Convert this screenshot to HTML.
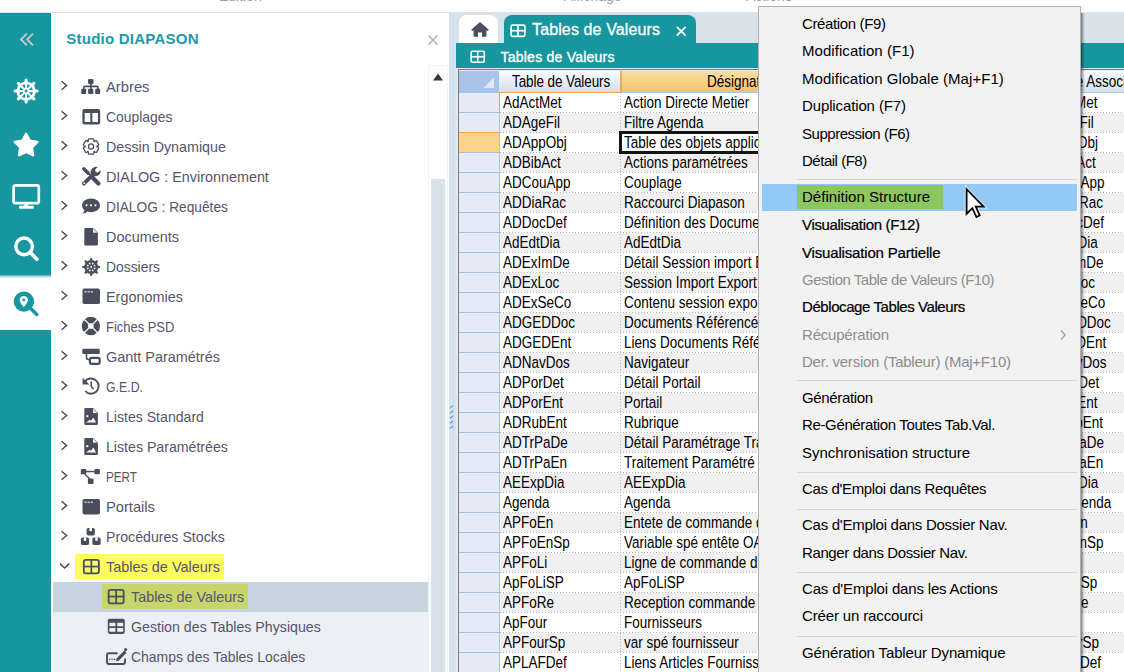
<!DOCTYPE html>
<html><head><meta charset="utf-8"><style>
html,body{margin:0;padding:0;}
body{width:1124px;height:672px;overflow:hidden;position:relative;background:#fff;font-family:'Liberation Sans', sans-serif;}
.abs{position:absolute;}
.t{position:absolute;white-space:nowrap;}
.dotx{background:repeating-linear-gradient(90deg,#b4b4b4 0 1px,transparent 1px 3px);}
.doty{background:repeating-linear-gradient(180deg,#b4b4b4 0 1px,transparent 1px 3px);}
.focus{box-sizing:border-box;border:3px solid #141414;outline:none;}
</style></head><body>
<div class="abs" style="left:0;top:12px;width:1124px;height:1px;background:#dce5ec"></div><div class="t " style="left:219px;top:-11.15px;font-size:14px;line-height:14px;color:#9a9ea6;">Edition</div><div class="t " style="left:563.5px;top:-11.15px;font-size:14px;line-height:14px;color:#9a9ea6;">Affichage</div><div class="t " style="left:746px;top:-11.15px;font-size:14px;line-height:14px;color:#9a9ea6;">Actions</div><div class="abs" style="left:0;top:13px;width:51px;height:659px;background:#1896a0"></div><div class="abs" style="left:0;top:275px;width:51px;height:55px;background:#fff"></div><div class="abs" style="left:0;top:275px;width:51px;height:3px;background:linear-gradient(rgba(24,150,160,0.75),rgba(24,150,160,0))"></div><svg class="abs" style="left:0;top:0" width="51" height="340" viewBox="0 0 51 340"><path d="M26.9 33.6L21 39.5L26.9 45.4M33 33.6L27.1 39.5L33 45.4" fill="none" stroke="#c8cacf" stroke-width="1.9"/><circle cx="26.1" cy="91.1" r="8.3" fill="none" stroke="#fff" stroke-width="2.8"/><line x1="28.60" y1="91.10" x2="35.10" y2="91.10" stroke="#fff" stroke-width="2.0"/><line x1="35.30" y1="91.10" x2="37.10" y2="91.10" stroke="#fff" stroke-width="3.0" stroke-linecap="round"/><line x1="27.87" y1="92.87" x2="32.46" y2="97.46" stroke="#fff" stroke-width="2.0"/><line x1="32.61" y1="97.61" x2="33.88" y2="98.88" stroke="#fff" stroke-width="3.0" stroke-linecap="round"/><line x1="26.10" y1="93.60" x2="26.10" y2="100.10" stroke="#fff" stroke-width="2.0"/><line x1="26.10" y1="100.30" x2="26.10" y2="102.10" stroke="#fff" stroke-width="3.0" stroke-linecap="round"/><line x1="24.33" y1="92.87" x2="19.74" y2="97.46" stroke="#fff" stroke-width="2.0"/><line x1="19.59" y1="97.61" x2="18.32" y2="98.88" stroke="#fff" stroke-width="3.0" stroke-linecap="round"/><line x1="23.60" y1="91.10" x2="17.10" y2="91.10" stroke="#fff" stroke-width="2.0"/><line x1="16.90" y1="91.10" x2="15.10" y2="91.10" stroke="#fff" stroke-width="3.0" stroke-linecap="round"/><line x1="24.33" y1="89.33" x2="19.74" y2="84.74" stroke="#fff" stroke-width="2.0"/><line x1="19.59" y1="84.59" x2="18.32" y2="83.32" stroke="#fff" stroke-width="3.0" stroke-linecap="round"/><line x1="26.10" y1="88.60" x2="26.10" y2="82.10" stroke="#fff" stroke-width="2.0"/><line x1="26.10" y1="81.90" x2="26.10" y2="80.10" stroke="#fff" stroke-width="3.0" stroke-linecap="round"/><line x1="27.87" y1="89.33" x2="32.46" y2="84.74" stroke="#fff" stroke-width="2.0"/><line x1="32.61" y1="84.59" x2="33.88" y2="83.32" stroke="#fff" stroke-width="3.0" stroke-linecap="round"/><circle cx="26.1" cy="91.1" r="3.3" fill="#fff"/><circle cx="26.1" cy="91.1" r="1.5" fill="#1896a0"/><polygon points="26.10,133.70 29.74,140.58 37.42,141.92 32.00,147.52 33.09,155.23 26.10,151.80 19.11,155.23 20.20,147.52 14.78,141.92 22.46,140.58" fill="#fff" stroke="#fff" stroke-width="2.4" stroke-linejoin="round"/><rect x="13.6" y="185.4" width="25.2" height="17.8" rx="2" fill="none" stroke="#fff" stroke-width="2.7"/><rect x="24.4" y="203" width="3.6" height="3.5" fill="#fff"/><rect x="19" y="205.8" width="14.8" height="3" rx="1" fill="#fff"/><circle cx="24.1" cy="246.4" r="8.3" fill="none" stroke="#fff" stroke-width="3.5"/><line x1="30.6" y1="252.9" x2="36.9" y2="259.2" stroke="#fff" stroke-width="3.7" stroke-linecap="round"/><circle cx="23.9" cy="301.6" r="10.2" fill="#1896a0"/><line x1="30" y1="307.7" x2="36.8" y2="314.5" stroke="#1896a0" stroke-width="3.5" stroke-linecap="round"/><path d="M23.8 307.2C22.2 305 19.6 302.4 19.6 300.1A4.2 4.2 0 0 1 28 300.1C28 302.4 25.4 305 23.8 307.2Z" fill="#fff"/><circle cx="23.8" cy="299.9" r="1.4" fill="#1896a0"/></svg><div class="abs" style="left:51px;top:13px;width:398px;height:659px;background:#fff"></div><div class="t " style="left:66.3px;top:31.10px;font-size:15px;line-height:15px;color:#1b9aab;font-weight:bold;letter-spacing:0.24px;">Studio DIAPASON</div><svg class="abs" style="left:427px;top:34px" width="12" height="12" viewBox="0 0 12 12"><path d="M1.5 1.5L10.5 10.5M10.5 1.5L1.5 10.5" stroke="#a9b1bb" stroke-width="1.5"/></svg><div class="abs" style="left:53px;top:582px;width:375px;height:30px;background:#c8d5e0"></div><div class="abs" style="left:53px;top:612px;width:375px;height:60px;background:#ecf0f4"></div><div class="abs" style="left:75px;top:554px;width:149px;height:25px;background:#fdfd62"></div><div class="abs" style="left:102px;top:584px;width:146px;height:25px;background:#c6d56c"></div><div class="t " style="left:105.5px;top:79.98px;font-size:14.2px;line-height:14.2px;color:#57546c;transform:scaleX(1.0402);transform-origin:0 0;">Arbres</div><div class="t " style="left:105.5px;top:109.98px;font-size:14.2px;line-height:14.2px;color:#57546c;transform:scaleX(0.9810);transform-origin:0 0;">Couplages</div><div class="t " style="left:105.5px;top:139.98px;font-size:14.2px;line-height:14.2px;color:#57546c;transform:scaleX(1.0070);transform-origin:0 0;">Dessin Dynamique</div><div class="t " style="left:105.5px;top:169.98px;font-size:14.2px;line-height:14.2px;color:#57546c;transform:scaleX(1.0124);transform-origin:0 0;">DIALOG : Environnement</div><div class="t " style="left:105.5px;top:199.98px;font-size:14.2px;line-height:14.2px;color:#57546c;transform:scaleX(0.9661);transform-origin:0 0;">DIALOG : Requêtes</div><div class="t " style="left:105.5px;top:229.98px;font-size:14.2px;line-height:14.2px;color:#57546c;transform:scaleX(1.0164);transform-origin:0 0;">Documents</div><div class="t " style="left:105.5px;top:259.98px;font-size:14.2px;line-height:14.2px;color:#57546c;transform:scaleX(0.9777);transform-origin:0 0;">Dossiers</div><div class="t " style="left:105.5px;top:289.98px;font-size:14.2px;line-height:14.2px;color:#57546c;transform:scaleX(1.0162);transform-origin:0 0;">Ergonomies</div><div class="t " style="left:105.5px;top:319.98px;font-size:14.2px;line-height:14.2px;color:#57546c;transform:scaleX(0.9124);transform-origin:0 0;">Fiches PSD</div><div class="t " style="left:105.5px;top:349.98px;font-size:14.2px;line-height:14.2px;color:#57546c;transform:scaleX(1.0172);transform-origin:0 0;">Gantt Paramétrés</div><div class="t " style="left:105.5px;top:379.98px;font-size:14.2px;line-height:14.2px;color:#57546c;transform:scaleX(0.8683);transform-origin:0 0;">G.E.D.</div><div class="t " style="left:105.5px;top:409.98px;font-size:14.2px;line-height:14.2px;color:#57546c;transform:scaleX(0.9932);transform-origin:0 0;">Listes Standard</div><div class="t " style="left:105.5px;top:439.98px;font-size:14.2px;line-height:14.2px;color:#57546c;transform:scaleX(0.9973);transform-origin:0 0;">Listes Paramétrées</div><div class="t " style="left:105.5px;top:469.98px;font-size:14.2px;line-height:14.2px;color:#57546c;transform:scaleX(0.8242);transform-origin:0 0;">PERT</div><div class="t " style="left:105.5px;top:499.98px;font-size:14.2px;line-height:14.2px;color:#57546c;transform:scaleX(1.0348);transform-origin:0 0;">Portails</div><div class="t " style="left:105.5px;top:529.98px;font-size:14.2px;line-height:14.2px;color:#57546c;transform:scaleX(0.9986);transform-origin:0 0;">Procédures Stocks</div><div class="t " style="left:105.5px;top:559.98px;font-size:14.2px;line-height:14.2px;color:#57546c;transform:scaleX(1.0195);transform-origin:0 0;">Tables de Valeurs</div><div class="t " style="left:130.8px;top:589.98px;font-size:14.2px;line-height:14.2px;color:#57546c;transform:scaleX(1.0123);transform-origin:0 0;">Tables de Valeurs</div><div class="t " style="left:130.8px;top:619.98px;font-size:14.2px;line-height:14.2px;color:#57546c;transform:scaleX(1.0002);transform-origin:0 0;">Gestion des Tables Physiques</div><div class="t " style="left:130.8px;top:649.98px;font-size:14.2px;line-height:14.2px;color:#57546c;transform:scaleX(0.9840);transform-origin:0 0;">Champs des Tables Locales</div><svg class="abs" style="left:0;top:0" width="449" height="672" viewBox="0 0 449 672"><path d="M61.6 81.2L66.6 85.5L61.6 89.8" fill="none" stroke="#4d4a5e" stroke-width="1.5"/><path d="M61.6 111.2L66.6 115.5L61.6 119.8" fill="none" stroke="#4d4a5e" stroke-width="1.5"/><path d="M61.6 141.2L66.6 145.5L61.6 149.8" fill="none" stroke="#4d4a5e" stroke-width="1.5"/><path d="M61.6 171.2L66.6 175.5L61.6 179.8" fill="none" stroke="#4d4a5e" stroke-width="1.5"/><path d="M61.6 201.2L66.6 205.5L61.6 209.8" fill="none" stroke="#4d4a5e" stroke-width="1.5"/><path d="M61.6 231.2L66.6 235.5L61.6 239.8" fill="none" stroke="#4d4a5e" stroke-width="1.5"/><path d="M61.6 261.2L66.6 265.5L61.6 269.8" fill="none" stroke="#4d4a5e" stroke-width="1.5"/><path d="M61.6 291.2L66.6 295.5L61.6 299.8" fill="none" stroke="#4d4a5e" stroke-width="1.5"/><path d="M61.6 321.2L66.6 325.5L61.6 329.8" fill="none" stroke="#4d4a5e" stroke-width="1.5"/><path d="M61.6 351.2L66.6 355.5L61.6 359.8" fill="none" stroke="#4d4a5e" stroke-width="1.5"/><path d="M61.6 381.2L66.6 385.5L61.6 389.8" fill="none" stroke="#4d4a5e" stroke-width="1.5"/><path d="M61.6 411.2L66.6 415.5L61.6 419.8" fill="none" stroke="#4d4a5e" stroke-width="1.5"/><path d="M61.6 441.2L66.6 445.5L61.6 449.8" fill="none" stroke="#4d4a5e" stroke-width="1.5"/><path d="M61.6 471.2L66.6 475.5L61.6 479.8" fill="none" stroke="#4d4a5e" stroke-width="1.5"/><path d="M61.6 501.2L66.6 505.5L61.6 509.8" fill="none" stroke="#4d4a5e" stroke-width="1.5"/><path d="M61.6 531.2L66.6 535.5L61.6 539.8" fill="none" stroke="#4d4a5e" stroke-width="1.5"/><path d="M60 563.6L64.6 568L69.2 563.6" fill="none" stroke="#4d4a5e" stroke-width="1.5"/><g fill="#4a4e5c"><rect x="88" y="79" width="5.5" height="5" rx="1"/><rect x="90" y="83" width="1.7" height="6"/><path d="M83 89V87.3Q83 85.5 84.8 85.5H96.9Q98.7 85.5 98.7 87.3V89H97V87.2H84.6V89Z"/><rect x="81.2" y="88.8" width="5" height="5.2" rx="1"/><rect x="88.1" y="88.8" width="5.2" height="5.2" rx="1"/><rect x="95.2" y="88.8" width="5" height="5.2" rx="1"/></g><path fill="#4a4e5c" fill-rule="evenodd" d="M84.4 109H98.2Q100.2 109 100.2 111V122.4Q100.2 124.4 98.2 124.4H84.4Q82.4 124.4 82.4 122.4V111Q82.4 109 84.4 109ZM84.7 113V122.1H90.3V113ZM92.3 113V122.1H97.9V113Z"/><polygon points="88.69,138.86 93.41,138.86 94.54,141.62 93.54,141.04 96.49,140.63 98.85,144.73 97.02,147.08 97.02,145.92 98.85,148.27 96.49,152.37 93.54,151.96 94.54,151.38 93.41,154.14 88.69,154.14 87.56,151.38 88.56,151.96 85.61,152.37 83.25,148.27 85.08,145.92 85.08,147.08 83.25,144.73 85.61,140.63 88.56,141.04 87.56,141.62" fill="none" stroke="#4a4e5c" stroke-width="1.25" stroke-linejoin="round"/><circle cx="91.05" cy="146.5" r="2.6" fill="none" stroke="#4a4e5c" stroke-width="1.25"/><g stroke="#4a4e5c" stroke-linecap="round" fill="none"><line x1="83.8" y1="168.8" x2="88.2" y2="173.2" stroke-width="3.4"/><line x1="88" y1="173" x2="92.5" y2="177.5" stroke-width="1.6"/><line x1="93" y1="178" x2="98.4" y2="183.6" stroke-width="4.2"/><line x1="83.9" y1="183.6" x2="92" y2="175.6" stroke-width="3.8"/></g><path fill="#4a4e5c" d="M90.6 174.2Q90 170 92.8 167.9Q95 166.4 97.8 167L95.2 169.6L95.6 172L98 172.4L100.5 169.8Q101 172.8 99.2 174.8Q97 176.6 93.8 176Z"/><circle cx="84.3" cy="183.2" r="0.9" fill="#fff"/><path fill="#4a4e5c" d="M91 198.4C96 198.4 100 201.3 100 205.3C100 209.2 96 212.2 91 212.2C89.7 212.2 88.5 212 87.4 211.6C86.2 212.6 84.5 213.6 82.4 213.6C83.4 212.7 84.2 211.6 84.5 210.3C83 209 82 207.2 82 205.3C82 201.3 86 198.4 91 198.4Z"/><circle cx="86.5" cy="205.3" r="1.1" fill="#fff"/><circle cx="91" cy="205.3" r="1.1" fill="#fff"/><circle cx="95.5" cy="205.3" r="1.1" fill="#fff"/><path fill="#4a4e5c" d="M85.3 227.9H93L97.9 232.8V244.2Q97.9 245.4 96.7 245.4H85.5Q84.3 245.4 84.3 244.2V229.1Q84.3 227.9 85.3 227.9Z"/><path fill="#fff" d="M93 228.6V232.8H97.2Z" opacity="0.9"/><circle cx="91.2" cy="267" r="5.7" fill="none" stroke="#4a4e5c" stroke-width="2.5"/><line x1="92.70" y1="267.00" x2="97.70" y2="267.00" stroke="#4a4e5c" stroke-width="1.5"/><line x1="97.80" y1="267.00" x2="99.10" y2="267.00" stroke="#4a4e5c" stroke-width="2.3" stroke-linecap="round"/><line x1="92.26" y1="268.06" x2="95.80" y2="271.60" stroke="#4a4e5c" stroke-width="1.5"/><line x1="95.87" y1="271.67" x2="96.79" y2="272.59" stroke="#4a4e5c" stroke-width="2.3" stroke-linecap="round"/><line x1="91.20" y1="268.50" x2="91.20" y2="273.50" stroke="#4a4e5c" stroke-width="1.5"/><line x1="91.20" y1="273.60" x2="91.20" y2="274.90" stroke="#4a4e5c" stroke-width="2.3" stroke-linecap="round"/><line x1="90.14" y1="268.06" x2="86.60" y2="271.60" stroke="#4a4e5c" stroke-width="1.5"/><line x1="86.53" y1="271.67" x2="85.61" y2="272.59" stroke="#4a4e5c" stroke-width="2.3" stroke-linecap="round"/><line x1="89.70" y1="267.00" x2="84.70" y2="267.00" stroke="#4a4e5c" stroke-width="1.5"/><line x1="84.60" y1="267.00" x2="83.30" y2="267.00" stroke="#4a4e5c" stroke-width="2.3" stroke-linecap="round"/><line x1="90.14" y1="265.94" x2="86.60" y2="262.40" stroke="#4a4e5c" stroke-width="1.5"/><line x1="86.53" y1="262.33" x2="85.61" y2="261.41" stroke="#4a4e5c" stroke-width="2.3" stroke-linecap="round"/><line x1="91.20" y1="265.50" x2="91.20" y2="260.50" stroke="#4a4e5c" stroke-width="1.5"/><line x1="91.20" y1="260.40" x2="91.20" y2="259.10" stroke="#4a4e5c" stroke-width="2.3" stroke-linecap="round"/><line x1="92.26" y1="265.94" x2="95.80" y2="262.40" stroke="#4a4e5c" stroke-width="1.5"/><line x1="95.87" y1="262.33" x2="96.79" y2="261.41" stroke="#4a4e5c" stroke-width="2.3" stroke-linecap="round"/><circle cx="91.2" cy="267" r="2.4" fill="#4a4e5c"/><circle cx="91.2" cy="267" r="0.9" fill="#fff"/><rect x="82.5" y="288.6" width="17.5" height="15.4" rx="1.8" fill="#4a4e5c"/><rect x="84.5" y="291.2" width="2.2" height="1.2" fill="#fff" opacity="0.8"/><rect x="87.6" y="291.2" width="2.2" height="1.2" fill="#fff" opacity="0.8"/><rect x="90.7" y="291.2" width="2.2" height="1.2" fill="#fff" opacity="0.8"/><rect x="82.5" y="499.0" width="17.5" height="15.4" rx="1.8" fill="#4a4e5c"/><rect x="84.5" y="501.6" width="2.2" height="1.2" fill="#fff" opacity="0.8"/><rect x="87.6" y="501.6" width="2.2" height="1.2" fill="#fff" opacity="0.8"/><rect x="90.7" y="501.6" width="2.2" height="1.2" fill="#fff" opacity="0.8"/><circle cx="90.9" cy="326" r="6.0" fill="none" stroke="#4a4e5c" stroke-width="6.4"/><line x1="92.74" y1="327.84" x2="97.83" y2="332.93" stroke="#fff" stroke-width="1.3"/><line x1="89.06" y1="327.84" x2="83.97" y2="332.93" stroke="#fff" stroke-width="1.3"/><line x1="89.06" y1="324.16" x2="83.97" y2="319.07" stroke="#fff" stroke-width="1.3"/><line x1="92.74" y1="324.16" x2="97.83" y2="319.07" stroke="#fff" stroke-width="1.3"/><circle cx="90.9" cy="326" r="2.5" fill="#fff"/><rect x="82.3" y="348.8" width="17.5" height="5.2" rx="1.3" fill="#4a4e5c"/><path d="M86.5 354V357.5Q86.5 359.5 88.5 359.5H90" fill="none" stroke="#4a4e5c" stroke-width="1.6"/><rect x="89.9" y="357.9" width="9.8" height="6" rx="2" fill="none" stroke="#4a4e5c" stroke-width="2.2"/><path d="M84.9 381.6A7.6 7.6 0 1 1 85.2 391" fill="none" stroke="#4a4e5c" stroke-width="1.9"/><path d="M82.6 377.8V384.6H89.4Z" fill="#4a4e5c"/><path d="M91.2 381.5V386.5L93.6 389" fill="none" stroke="#4a4e5c" stroke-width="1.6"/><path fill="#4a4e5c" d="M85.3 408.0H93L97.9 412.9V423.8Q97.9 425.0 96.7 425.0H85.5Q84.3 425.0 84.3 423.8V409.1Q84.3 408.0 85.3 408.0Z"/><path fill="#fff" d="M93 408.7V412.9H97.2Z" opacity="0.9"/><rect x="86.3" y="415.2" width="2" height="2" fill="#fff"/><path fill="#fff" d="M86.3 422.5L89.6 419.8L91 420.8L93.4 417.6L96 422.5Z"/><path fill="#4a4e5c" d="M85.3 437.9H93L97.9 442.8V453.7Q97.9 454.9 96.7 454.9H85.5Q84.3 454.9 84.3 453.7V439.0Q84.3 437.9 85.3 437.9Z"/><path fill="#fff" d="M93 438.6V442.8H97.2Z" opacity="0.9"/><rect x="86.3" y="445.1" width="2" height="2" fill="#fff"/><path fill="#fff" d="M86.3 452.4L89.6 449.7L91 450.7L93.4 447.5L96 452.4Z"/><g fill="#4a4e5c"><rect x="80.8" y="468.9" width="5.5" height="5.3" rx="1"/><rect x="94.4" y="468.9" width="5.5" height="5.3" rx="1"/><rect x="86" y="470.8" width="8.6" height="1.5"/><rect x="87.9" y="478.6" width="5.6" height="5.4" rx="1"/><path d="M84 474L89.2 479.6L90.4 478.4L85.3 473.6Z"/></g><g fill="#4a4e5c"><rect x="86.6" y="528" width="8.2" height="7.4" rx="1.6"/><rect x="80.9" y="537.6" width="8.2" height="7.4" rx="1.6"/><rect x="92.4" y="537.6" width="8.2" height="7.4" rx="1.6"/></g><rect x="89.5" y="527.8" width="2.4" height="3.4" fill="#fff"/><rect x="83.8" y="537.4" width="2.4" height="3.4" fill="#fff"/><rect x="95.3" y="537.4" width="2.4" height="3.4" fill="#fff"/><rect x="83.8" y="559.9" width="15.1" height="13.4" rx="2" fill="none" stroke="#4a4e5c" stroke-width="1.8"/><rect x="90.5" y="560.0" width="1.7" height="13.4" fill="#4a4e5c"/><rect x="83.9" y="565.7" width="15" height="1.7" fill="#4a4e5c"/><rect x="108.6" y="589.9" width="15.1" height="13.4" rx="2" fill="none" stroke="#4a4e5c" stroke-width="1.8"/><rect x="115.3" y="590.0" width="1.7" height="13.4" fill="#4a4e5c"/><rect x="108.7" y="595.7" width="15" height="1.7" fill="#4a4e5c"/><path fill="#4a4e5c" fill-rule="evenodd" d="M109.6 618.7H123.0Q124.8 618.7 124.8 620.5V632.1Q124.8 633.9 123.0 633.9H109.6Q107.8 633.9 107.8 632.1V620.5Q107.8 618.7 109.6 618.7ZM109.4 622.7V626.3H115.4V622.7ZM117.2 622.7V626.3H123.2V622.7ZM109.4 628.1V631.7H115.4V628.1ZM117.2 628.1V631.7H123.2V628.1Z"/><path d="M117.5 653.3H109Q107 653.3 107 655.3V662Q107 664 109 664H123Q125 664 125 662V658.5" fill="none" stroke="#4a4e5c" stroke-width="1.9"/><path d="M116.5 658.5L124.4 650.6L126.6 652.8L118.7 660.7L116 661.2Z" fill="#4a4e5c"/><circle cx="125.6" cy="649.6" r="1.6" fill="#4a4e5c"/><g fill="#4a4e5c"><rect x="109" y="658.6" width="1.3" height="1.3"/><rect x="111.5" y="658.6" width="1.3" height="1.3"/><rect x="114" y="658.6" width="1.3" height="1.3"/></g></svg><div class="abs" style="left:428px;top:65px;width:20px;height:620px;box-sizing:border-box;border:1px solid #f1f3fa"></div><svg class="abs" style="left:431px;top:71px" width="14" height="12" viewBox="0 0 14 12"><path d="M2 9.5L7 2.5L12 9.5Z" fill="#3a3a3a"/></svg><div class="abs" style="left:431px;top:179px;width:14px;height:493px;background:#d8e2ea"></div><div class="abs" style="left:449px;top:12px;width:675px;height:31px;background:#d8e2ea"></div><div class="abs" style="left:449px;top:13px;width:8px;height:659px;background:#d8e2ea"></div><div class="abs" style="left:453px;top:13px;width:1px;height:659px;background:#c4dcf8"></div><div class="abs" style="left:456px;top:68px;width:2px;height:604px;background:#e3e8ec"></div><div class="abs" style="left:456px;top:67px;width:668px;height:2px;background:#e3e8ec"></div><svg class="abs" style="left:449px;top:402px" width="8" height="30" viewBox="0 0 8 30"><line x1="1.6" y1="5.7" x2="3.6" y2="3.9" stroke="#4a8ade" stroke-width="1.1" stroke-linecap="round"/><line x1="1.6" y1="10.8" x2="3.6" y2="9.0" stroke="#4a8ade" stroke-width="1.1" stroke-linecap="round"/><line x1="1.6" y1="15.9" x2="3.6" y2="14.1" stroke="#4a8ade" stroke-width="1.1" stroke-linecap="round"/><line x1="1.6" y1="21.0" x2="3.6" y2="19.2" stroke="#4a8ade" stroke-width="1.1" stroke-linecap="round"/><line x1="1.6" y1="26.1" x2="3.6" y2="24.3" stroke="#4a8ade" stroke-width="1.1" stroke-linecap="round"/></svg><div class="abs" style="left:459.2px;top:14.6px;width:39.3px;height:28.4px;background:#fff;border-radius:8px 8px 0 0"></div><svg class="abs" style="left:470px;top:21px" width="20" height="17" viewBox="0 0 20 17"><path d="M10 1L1.2 8.8L2.4 10L3.6 9V15.8H8V11.6H12V15.8H16.4V9L17.6 10L18.8 8.8Z" fill="#4a4e5c"/></svg><div class="abs" style="left:504.4px;top:14.5px;width:191.3px;height:29px;background:#1896a0;border-radius:8px 8px 0 0"></div><svg class="abs" style="left:509px;top:23px" width="18" height="15" viewBox="0 0 18 15"><rect x="2.1" y="2.1" width="13.8" height="11.2" rx="1.6" fill="none" stroke="#fff" stroke-width="1.7"/><rect x="8.15" y="2" width="1.7" height="11.4" fill="#fff"/><rect x="2" y="6.85" width="14" height="1.7" fill="#fff"/></svg><div class="t " style="left:532px;top:22.36px;font-size:16px;line-height:16px;color:#fff;-webkit-text-stroke:0.3px #fff;letter-spacing:0.125px;">Tables de Valeurs</div><svg class="abs" style="left:675px;top:25px" width="13" height="12" viewBox="0 0 13 12"><path d="M1.8 1.8L10.6 10.6M10.6 1.8L1.8 10.6" stroke="#fff" stroke-width="1.7"/></svg><div class="abs" style="left:456px;top:43px;width:668px;height:25px;background:#1896a0"></div><svg class="abs" style="left:469px;top:49px" width="18" height="15" viewBox="0 0 18 15"><rect x="2.1" y="2.3" width="13.2" height="11" rx="1.5" fill="none" stroke="#fff" stroke-width="1.6"/><rect x="7.9" y="2.2" width="1.6" height="11.2" fill="#fff"/><rect x="2" y="6.95" width="13.4" height="1.6" fill="#fff"/></svg><div class="t " style="left:500.5px;top:49.75px;font-size:14px;line-height:14px;color:#fff;-webkit-text-stroke:0.35px #fff;letter-spacing:0.234px;">Tables de Valeurs</div><div class="abs" style="left:458px;top:69px;width:666px;height:1px;background:#7c7c7c"></div><div class="abs" style="left:458px;top:69px;width:1px;height:603px;background:#7c7c7c"></div><div class="abs" style="left:459px;top:70px;width:665px;height:1px;background:#e2ebf7"></div><div class="abs" style="left:459px;top:71px;width:40px;height:21px;background:#a9c4e8"></div><svg class="abs" style="left:483px;top:77px" width="12" height="12" viewBox="0 0 12 12"><path d="M11 0.6V11H0.6Z" fill="#dfe8f5"/></svg><div class="abs" style="left:499px;top:71px;width:121px;height:21px;background:linear-gradient(#f9fbfd,#d7dfeb)"></div><div class="abs" style="left:620px;top:71px;width:2px;height:21px;background:#f2aa58"></div><div class="abs" style="left:622px;top:71px;width:413px;height:21px;background:linear-gradient(#fbdda5,#f1c46b)"></div><div class="abs" style="left:1035px;top:71px;width:89px;height:21px;background:linear-gradient(#f9fbfd,#d7dfeb)"></div><div class="abs" style="left:1035px;top:71px;width:1px;height:21px;background:#c8d2de"></div><div class="abs" style="left:499px;top:92px;width:121px;height:1px;background:#f4a24c"></div><div class="abs" style="left:620px;top:92px;width:504px;height:1px;background:#a9c8e6"></div><div class="abs" style="left:459px;top:92px;width:40px;height:1px;background:#a9c4e8"></div><div class="t" style="left:511.5px;top:72.80px;font-size:16.3px;line-height:16.3px;color:#000;transform:scaleX(0.8282);transform-origin:0 0;letter-spacing:-0.1px">Table de Valeurs</div><div class="t" style="left:706.9px;top:72.80px;font-size:16.3px;line-height:16.3px;color:#000;transform:scaleX(0.8282);transform-origin:0 0;letter-spacing:0px">Désignation</div><div class="t" style="left:1051px;top:72.80px;font-size:16.3px;line-height:16.3px;color:#000;transform:scaleX(0.8282);transform-origin:0 0;letter-spacing:0px">Table Associée</div><div class="abs" style="left:459px;top:93px;width:40px;height:579px;background:#e4eaf6"></div><div class="abs" style="left:499px;top:93px;width:1px;height:579px;background:#a9c2de"></div><div class="abs" style="left:500px;top:93px;width:624px;height:19px;background:#fff"></div><div class="abs" style="left:459px;top:112px;width:40px;height:1px;background:#a9c2de"></div><div class="abs dotx" style="left:500px;top:112px;width:624px;height:1px;"></div><div class="t" style="left:502.6px;top:94.40px;font-size:16.3px;line-height:16.3px;color:#000;transform:scaleX(0.8282);transform-origin:0 0;letter-spacing:0px">AdActMet</div><div class="abs" style="left:624px;top:93px;width:407px;height:19px;overflow:hidden"><div class="t" style="left:0px;top:1.40px;font-size:16.3px;line-height:16.3px;color:#000;transform:scaleX(0.8282);transform-origin:0 0;letter-spacing:0px">Action Directe Metier</div></div><div class="t" style="right:26.4px;top:94.40px;font-size:16.3px;line-height:16.3px;color:#000;transform:scaleX(0.8282);transform-origin:100% 0;letter-spacing:0px">AdActMet</div><div class="abs" style="left:500px;top:113px;width:624px;height:19px;background:#f0f0f0"></div><div class="abs" style="left:459px;top:132px;width:40px;height:1px;background:#a9c2de"></div><div class="abs dotx" style="left:500px;top:132px;width:624px;height:1px;"></div><div class="t" style="left:502.6px;top:114.40px;font-size:16.3px;line-height:16.3px;color:#000;transform:scaleX(0.8282);transform-origin:0 0;letter-spacing:0px">ADAgeFil</div><div class="abs" style="left:624px;top:113px;width:407px;height:19px;overflow:hidden"><div class="t" style="left:0px;top:1.40px;font-size:16.3px;line-height:16.3px;color:#000;transform:scaleX(0.8282);transform-origin:0 0;letter-spacing:0px">Filtre Agenda</div></div><div class="t" style="right:30.5px;top:114.40px;font-size:16.3px;line-height:16.3px;color:#000;transform:scaleX(0.8282);transform-origin:100% 0;letter-spacing:0px">ADAgeFil</div><div class="abs" style="left:500px;top:133px;width:624px;height:19px;background:#fff"></div><div class="abs" style="left:459px;top:152px;width:40px;height:1px;background:#a9c2de"></div><div class="abs dotx" style="left:500px;top:152px;width:624px;height:1px;"></div><div class="t" style="left:502.6px;top:134.40px;font-size:16.3px;line-height:16.3px;color:#000;transform:scaleX(0.8282);transform-origin:0 0;letter-spacing:0px">ADAppObj</div><div class="abs" style="left:624px;top:133px;width:407px;height:19px;overflow:hidden"><div class="t" style="left:0px;top:1.40px;font-size:16.3px;line-height:16.3px;color:#000;transform:scaleX(0.8282);transform-origin:0 0;letter-spacing:0px">Table des objets application</div></div><div class="t" style="right:26.4px;top:134.40px;font-size:16.3px;line-height:16.3px;color:#000;transform:scaleX(0.8282);transform-origin:100% 0;letter-spacing:0px">ADAppObj</div><div class="abs" style="left:500px;top:153px;width:624px;height:19px;background:#f0f0f0"></div><div class="abs" style="left:459px;top:172px;width:40px;height:1px;background:#a9c2de"></div><div class="abs dotx" style="left:500px;top:172px;width:624px;height:1px;"></div><div class="t" style="left:502.6px;top:154.40px;font-size:16.3px;line-height:16.3px;color:#000;transform:scaleX(0.8282);transform-origin:0 0;letter-spacing:0px">ADBibAct</div><div class="abs" style="left:624px;top:153px;width:407px;height:19px;overflow:hidden"><div class="t" style="left:0px;top:1.40px;font-size:16.3px;line-height:16.3px;color:#000;transform:scaleX(0.8282);transform-origin:0 0;letter-spacing:0px">Actions paramétrées</div></div><div class="t" style="right:28.0px;top:154.40px;font-size:16.3px;line-height:16.3px;color:#000;transform:scaleX(0.8282);transform-origin:100% 0;letter-spacing:0px">ADBibAct</div><div class="abs" style="left:500px;top:173px;width:624px;height:19px;background:#fff"></div><div class="abs" style="left:459px;top:192px;width:40px;height:1px;background:#a9c2de"></div><div class="abs dotx" style="left:500px;top:192px;width:624px;height:1px;"></div><div class="t" style="left:502.6px;top:174.40px;font-size:16.3px;line-height:16.3px;color:#000;transform:scaleX(0.8282);transform-origin:0 0;letter-spacing:0px">ADCouApp</div><div class="abs" style="left:624px;top:173px;width:407px;height:19px;overflow:hidden"><div class="t" style="left:0px;top:1.40px;font-size:16.3px;line-height:16.3px;color:#000;transform:scaleX(0.8282);transform-origin:0 0;letter-spacing:0px">Couplage</div></div><div class="t" style="right:19.2px;top:174.40px;font-size:16.3px;line-height:16.3px;color:#000;transform:scaleX(0.8282);transform-origin:100% 0;letter-spacing:0px">ADCouApp</div><div class="abs" style="left:500px;top:193px;width:624px;height:19px;background:#f0f0f0"></div><div class="abs" style="left:459px;top:212px;width:40px;height:1px;background:#a9c2de"></div><div class="abs dotx" style="left:500px;top:212px;width:624px;height:1px;"></div><div class="t" style="left:502.6px;top:194.40px;font-size:16.3px;line-height:16.3px;color:#000;transform:scaleX(0.8282);transform-origin:0 0;letter-spacing:0px">ADDiaRac</div><div class="abs" style="left:624px;top:193px;width:407px;height:19px;overflow:hidden"><div class="t" style="left:0px;top:1.40px;font-size:16.3px;line-height:16.3px;color:#000;transform:scaleX(0.8282);transform-origin:0 0;letter-spacing:0px">Raccourci Diapason</div></div><div class="t" style="right:21.2px;top:194.40px;font-size:16.3px;line-height:16.3px;color:#000;transform:scaleX(0.8282);transform-origin:100% 0;letter-spacing:0px">ADDiaRac</div><div class="abs" style="left:500px;top:213px;width:624px;height:19px;background:#fff"></div><div class="abs" style="left:459px;top:232px;width:40px;height:1px;background:#a9c2de"></div><div class="abs dotx" style="left:500px;top:232px;width:624px;height:1px;"></div><div class="t" style="left:502.6px;top:214.40px;font-size:16.3px;line-height:16.3px;color:#000;transform:scaleX(0.8282);transform-origin:0 0;letter-spacing:0px">ADDocDef</div><div class="abs" style="left:624px;top:213px;width:407px;height:19px;overflow:hidden"><div class="t" style="left:0px;top:1.40px;font-size:16.3px;line-height:16.3px;color:#000;transform:scaleX(0.8282);transform-origin:0 0;letter-spacing:0px">Définition des Documents</div></div><div class="t" style="right:20.5px;top:214.40px;font-size:16.3px;line-height:16.3px;color:#000;transform:scaleX(0.8282);transform-origin:100% 0;letter-spacing:0px">ADDocDef</div><div class="abs" style="left:500px;top:233px;width:624px;height:19px;background:#f0f0f0"></div><div class="abs" style="left:459px;top:252px;width:40px;height:1px;background:#a9c2de"></div><div class="abs dotx" style="left:500px;top:252px;width:624px;height:1px;"></div><div class="t" style="left:502.6px;top:234.40px;font-size:16.3px;line-height:16.3px;color:#000;transform:scaleX(0.8282);transform-origin:0 0;letter-spacing:0px">AdEdtDia</div><div class="abs" style="left:624px;top:233px;width:407px;height:19px;overflow:hidden"><div class="t" style="left:0px;top:1.40px;font-size:16.3px;line-height:16.3px;color:#000;transform:scaleX(0.8282);transform-origin:0 0;letter-spacing:0px">AdEdtDia</div></div><div class="t" style="right:25.8px;top:234.40px;font-size:16.3px;line-height:16.3px;color:#000;transform:scaleX(0.8282);transform-origin:100% 0;letter-spacing:0px">AdEdtDia</div><div class="abs" style="left:500px;top:253px;width:624px;height:19px;background:#fff"></div><div class="abs" style="left:459px;top:272px;width:40px;height:1px;background:#a9c2de"></div><div class="abs dotx" style="left:500px;top:272px;width:624px;height:1px;"></div><div class="t" style="left:502.6px;top:254.40px;font-size:16.3px;line-height:16.3px;color:#000;transform:scaleX(0.8282);transform-origin:0 0;letter-spacing:0px">ADExImDe</div><div class="abs" style="left:624px;top:253px;width:407px;height:19px;overflow:hidden"><div class="t" style="left:0px;top:1.40px;font-size:16.3px;line-height:16.3px;color:#000;transform:scaleX(0.8282);transform-origin:0 0;letter-spacing:0px">Détail Session import Export</div></div><div class="t" style="right:20.5px;top:254.40px;font-size:16.3px;line-height:16.3px;color:#000;transform:scaleX(0.8282);transform-origin:100% 0;letter-spacing:0px">ADExImDe</div><div class="abs" style="left:500px;top:273px;width:624px;height:19px;background:#f0f0f0"></div><div class="abs" style="left:459px;top:292px;width:40px;height:1px;background:#a9c2de"></div><div class="abs dotx" style="left:500px;top:292px;width:624px;height:1px;"></div><div class="t" style="left:502.6px;top:274.40px;font-size:16.3px;line-height:16.3px;color:#000;transform:scaleX(0.8282);transform-origin:0 0;letter-spacing:0px">ADExLoc</div><div class="abs" style="left:624px;top:273px;width:407px;height:19px;overflow:hidden"><div class="t" style="left:0px;top:1.40px;font-size:16.3px;line-height:16.3px;color:#000;transform:scaleX(0.8282);transform-origin:0 0;letter-spacing:0px">Session Import Export Local</div></div><div class="t" style="right:29.3px;top:274.40px;font-size:16.3px;line-height:16.3px;color:#000;transform:scaleX(0.8282);transform-origin:100% 0;letter-spacing:0px">ADExLoc</div><div class="abs" style="left:500px;top:293px;width:624px;height:19px;background:#fff"></div><div class="abs" style="left:459px;top:312px;width:40px;height:1px;background:#a9c2de"></div><div class="abs dotx" style="left:500px;top:312px;width:624px;height:1px;"></div><div class="t" style="left:502.6px;top:294.40px;font-size:16.3px;line-height:16.3px;color:#000;transform:scaleX(0.8282);transform-origin:0 0;letter-spacing:0px">ADExSeCo</div><div class="abs" style="left:624px;top:293px;width:407px;height:19px;overflow:hidden"><div class="t" style="left:0px;top:1.40px;font-size:16.3px;line-height:16.3px;color:#000;transform:scaleX(0.8282);transform-origin:0 0;letter-spacing:0px">Contenu session export</div></div><div class="t" style="right:18.6px;top:294.40px;font-size:16.3px;line-height:16.3px;color:#000;transform:scaleX(0.8282);transform-origin:100% 0;letter-spacing:0px">ADExSeCo</div><div class="abs" style="left:500px;top:313px;width:624px;height:19px;background:#f0f0f0"></div><div class="abs" style="left:459px;top:332px;width:40px;height:1px;background:#a9c2de"></div><div class="abs dotx" style="left:500px;top:332px;width:624px;height:1px;"></div><div class="t" style="left:502.6px;top:314.40px;font-size:16.3px;line-height:16.3px;color:#000;transform:scaleX(0.8282);transform-origin:0 0;letter-spacing:0px">ADGEDDoc</div><div class="abs" style="left:624px;top:313px;width:407px;height:19px;overflow:hidden"><div class="t" style="left:0px;top:1.40px;font-size:16.3px;line-height:16.3px;color:#000;transform:scaleX(0.8282);transform-origin:0 0;letter-spacing:0px">Documents Référencés</div></div><div class="t" style="right:12.7px;top:314.40px;font-size:16.3px;line-height:16.3px;color:#000;transform:scaleX(0.8282);transform-origin:100% 0;letter-spacing:0px">ADGEDDoc</div><div class="abs" style="left:500px;top:333px;width:624px;height:19px;background:#fff"></div><div class="abs" style="left:459px;top:352px;width:40px;height:1px;background:#a9c2de"></div><div class="abs dotx" style="left:500px;top:352px;width:624px;height:1px;"></div><div class="t" style="left:502.6px;top:334.40px;font-size:16.3px;line-height:16.3px;color:#000;transform:scaleX(0.8282);transform-origin:0 0;letter-spacing:0px">ADGEDEnt</div><div class="abs" style="left:624px;top:333px;width:407px;height:19px;overflow:hidden"><div class="t" style="left:0px;top:1.40px;font-size:16.3px;line-height:16.3px;color:#000;transform:scaleX(0.8282);transform-origin:0 0;letter-spacing:0px">Liens Documents Référencés</div></div><div class="t" style="right:17.4px;top:334.40px;font-size:16.3px;line-height:16.3px;color:#000;transform:scaleX(0.8282);transform-origin:100% 0;letter-spacing:0px">ADGEDEnt</div><div class="abs" style="left:500px;top:353px;width:624px;height:19px;background:#f0f0f0"></div><div class="abs" style="left:459px;top:372px;width:40px;height:1px;background:#a9c2de"></div><div class="abs dotx" style="left:500px;top:372px;width:624px;height:1px;"></div><div class="t" style="left:502.6px;top:354.40px;font-size:16.3px;line-height:16.3px;color:#000;transform:scaleX(0.8282);transform-origin:0 0;letter-spacing:0px">ADNavDos</div><div class="abs" style="left:624px;top:353px;width:407px;height:19px;overflow:hidden"><div class="t" style="left:0px;top:1.40px;font-size:16.3px;line-height:16.3px;color:#000;transform:scaleX(0.8282);transform-origin:0 0;letter-spacing:0px">Navigateur</div></div><div class="t" style="right:17.4px;top:354.40px;font-size:16.3px;line-height:16.3px;color:#000;transform:scaleX(0.8282);transform-origin:100% 0;letter-spacing:0px">ADNavDos</div><div class="abs" style="left:500px;top:373px;width:624px;height:19px;background:#fff"></div><div class="abs" style="left:459px;top:392px;width:40px;height:1px;background:#a9c2de"></div><div class="abs dotx" style="left:500px;top:392px;width:624px;height:1px;"></div><div class="t" style="left:502.6px;top:374.40px;font-size:16.3px;line-height:16.3px;color:#000;transform:scaleX(0.8282);transform-origin:0 0;letter-spacing:0px">ADPorDet</div><div class="abs" style="left:624px;top:373px;width:407px;height:19px;overflow:hidden"><div class="t" style="left:0px;top:1.40px;font-size:16.3px;line-height:16.3px;color:#000;transform:scaleX(0.8282);transform-origin:0 0;letter-spacing:0px">Détail Portail</div></div><div class="t" style="right:24.6px;top:374.40px;font-size:16.3px;line-height:16.3px;color:#000;transform:scaleX(0.8282);transform-origin:100% 0;letter-spacing:0px">ADPorDet</div><div class="abs" style="left:500px;top:393px;width:624px;height:19px;background:#f0f0f0"></div><div class="abs" style="left:459px;top:412px;width:40px;height:1px;background:#a9c2de"></div><div class="abs dotx" style="left:500px;top:412px;width:624px;height:1px;"></div><div class="t" style="left:502.6px;top:394.40px;font-size:16.3px;line-height:16.3px;color:#000;transform:scaleX(0.8282);transform-origin:0 0;letter-spacing:0px">ADPorEnt</div><div class="abs" style="left:624px;top:393px;width:407px;height:19px;overflow:hidden"><div class="t" style="left:0px;top:1.40px;font-size:16.3px;line-height:16.3px;color:#000;transform:scaleX(0.8282);transform-origin:0 0;letter-spacing:0px">Portail</div></div><div class="t" style="right:26.4px;top:394.40px;font-size:16.3px;line-height:16.3px;color:#000;transform:scaleX(0.8282);transform-origin:100% 0;letter-spacing:0px">ADPorEnt</div><div class="abs" style="left:500px;top:413px;width:624px;height:19px;background:#fff"></div><div class="abs" style="left:459px;top:432px;width:40px;height:1px;background:#a9c2de"></div><div class="abs dotx" style="left:500px;top:432px;width:624px;height:1px;"></div><div class="t" style="left:502.6px;top:414.40px;font-size:16.3px;line-height:16.3px;color:#000;transform:scaleX(0.8282);transform-origin:0 0;letter-spacing:0px">ADRubEnt</div><div class="abs" style="left:624px;top:413px;width:407px;height:19px;overflow:hidden"><div class="t" style="left:0px;top:1.40px;font-size:16.3px;line-height:16.3px;color:#000;transform:scaleX(0.8282);transform-origin:0 0;letter-spacing:0px">Rubrique</div></div><div class="t" style="right:21.2px;top:414.40px;font-size:16.3px;line-height:16.3px;color:#000;transform:scaleX(0.8282);transform-origin:100% 0;letter-spacing:0px">ADRubEnt</div><div class="abs" style="left:500px;top:433px;width:624px;height:19px;background:#f0f0f0"></div><div class="abs" style="left:459px;top:452px;width:40px;height:1px;background:#a9c2de"></div><div class="abs dotx" style="left:500px;top:452px;width:624px;height:1px;"></div><div class="t" style="left:502.6px;top:434.40px;font-size:16.3px;line-height:16.3px;color:#000;transform:scaleX(0.8282);transform-origin:0 0;letter-spacing:0px">ADTrPaDe</div><div class="abs" style="left:624px;top:433px;width:407px;height:19px;overflow:hidden"><div class="t" style="left:0px;top:1.40px;font-size:16.3px;line-height:16.3px;color:#000;transform:scaleX(0.8282);transform-origin:0 0;letter-spacing:0px">Détail Paramétrage Traitement</div></div><div class="t" style="right:20.2px;top:434.40px;font-size:16.3px;line-height:16.3px;color:#000;transform:scaleX(0.8282);transform-origin:100% 0;letter-spacing:0px">ADTrPaDe</div><div class="abs" style="left:500px;top:453px;width:624px;height:19px;background:#fff"></div><div class="abs" style="left:459px;top:472px;width:40px;height:1px;background:#a9c2de"></div><div class="abs dotx" style="left:500px;top:472px;width:624px;height:1px;"></div><div class="t" style="left:502.6px;top:454.40px;font-size:16.3px;line-height:16.3px;color:#000;transform:scaleX(0.8282);transform-origin:0 0;letter-spacing:0px">ADTrPaEn</div><div class="abs" style="left:624px;top:453px;width:407px;height:19px;overflow:hidden"><div class="t" style="left:0px;top:1.40px;font-size:16.3px;line-height:16.3px;color:#000;transform:scaleX(0.8282);transform-origin:0 0;letter-spacing:0px">Traitement Paramétré</div></div><div class="t" style="right:21.2px;top:454.40px;font-size:16.3px;line-height:16.3px;color:#000;transform:scaleX(0.8282);transform-origin:100% 0;letter-spacing:0px">ADTrPaEn</div><div class="abs" style="left:500px;top:473px;width:624px;height:19px;background:#f0f0f0"></div><div class="abs" style="left:459px;top:492px;width:40px;height:1px;background:#a9c2de"></div><div class="abs dotx" style="left:500px;top:492px;width:624px;height:1px;"></div><div class="t" style="left:502.6px;top:474.40px;font-size:16.3px;line-height:16.3px;color:#000;transform:scaleX(0.8282);transform-origin:0 0;letter-spacing:0px">AEExpDia</div><div class="abs" style="left:624px;top:473px;width:407px;height:19px;overflow:hidden"><div class="t" style="left:0px;top:1.40px;font-size:16.3px;line-height:16.3px;color:#000;transform:scaleX(0.8282);transform-origin:0 0;letter-spacing:0px">AEExpDia</div></div><div class="t" style="right:25.3px;top:474.40px;font-size:16.3px;line-height:16.3px;color:#000;transform:scaleX(0.8282);transform-origin:100% 0;letter-spacing:0px">AEExpDia</div><div class="abs" style="left:500px;top:493px;width:624px;height:19px;background:#fff"></div><div class="abs" style="left:459px;top:512px;width:40px;height:1px;background:#a9c2de"></div><div class="abs dotx" style="left:500px;top:512px;width:624px;height:1px;"></div><div class="t" style="left:502.6px;top:494.40px;font-size:16.3px;line-height:16.3px;color:#000;transform:scaleX(0.8282);transform-origin:0 0;letter-spacing:0px">Agenda</div><div class="abs" style="left:624px;top:493px;width:407px;height:19px;overflow:hidden"><div class="t" style="left:0px;top:1.40px;font-size:16.3px;line-height:16.3px;color:#000;transform:scaleX(0.8282);transform-origin:0 0;letter-spacing:0px">Agenda</div></div><div class="t" style="right:12.8px;top:494.40px;font-size:16.3px;line-height:16.3px;color:#000;transform:scaleX(0.8282);transform-origin:100% 0;letter-spacing:0px">Agenda</div><div class="abs" style="left:500px;top:513px;width:624px;height:19px;background:#f0f0f0"></div><div class="abs" style="left:459px;top:532px;width:40px;height:1px;background:#a9c2de"></div><div class="abs dotx" style="left:500px;top:532px;width:624px;height:1px;"></div><div class="t" style="left:502.6px;top:514.40px;font-size:16.3px;line-height:16.3px;color:#000;transform:scaleX(0.8282);transform-origin:0 0;letter-spacing:0px">APFoEn</div><div class="abs" style="left:624px;top:513px;width:407px;height:19px;overflow:hidden"><div class="t" style="left:0px;top:1.40px;font-size:16.3px;line-height:16.3px;color:#000;transform:scaleX(0.8282);transform-origin:0 0;letter-spacing:0px">Entete de commande d'achat</div></div><div class="t" style="right:36.8px;top:514.40px;font-size:16.3px;line-height:16.3px;color:#000;transform:scaleX(0.8282);transform-origin:100% 0;letter-spacing:0px">APFoEn</div><div class="abs" style="left:500px;top:533px;width:624px;height:19px;background:#fff"></div><div class="abs" style="left:459px;top:552px;width:40px;height:1px;background:#a9c2de"></div><div class="abs dotx" style="left:500px;top:552px;width:624px;height:1px;"></div><div class="t" style="left:502.6px;top:534.40px;font-size:16.3px;line-height:16.3px;color:#000;transform:scaleX(0.8282);transform-origin:0 0;letter-spacing:0px">APFoEnSp</div><div class="abs" style="left:624px;top:533px;width:407px;height:19px;overflow:hidden"><div class="t" style="left:0px;top:1.40px;font-size:16.3px;line-height:16.3px;color:#000;transform:scaleX(0.8282);transform-origin:0 0;letter-spacing:0px">Variable spé entête OA</div></div><div class="t" style="right:20.2px;top:534.40px;font-size:16.3px;line-height:16.3px;color:#000;transform:scaleX(0.8282);transform-origin:100% 0;letter-spacing:0px">APFoEnSp</div><div class="abs" style="left:500px;top:553px;width:624px;height:19px;background:#f0f0f0"></div><div class="abs" style="left:459px;top:572px;width:40px;height:1px;background:#a9c2de"></div><div class="abs dotx" style="left:500px;top:572px;width:624px;height:1px;"></div><div class="t" style="left:502.6px;top:554.40px;font-size:16.3px;line-height:16.3px;color:#000;transform:scaleX(0.8282);transform-origin:0 0;letter-spacing:0px">APFoLi</div><div class="abs" style="left:624px;top:553px;width:407px;height:19px;overflow:hidden"><div class="t" style="left:0px;top:1.40px;font-size:16.3px;line-height:16.3px;color:#000;transform:scaleX(0.8282);transform-origin:0 0;letter-spacing:0px">Ligne de commande d'achat</div></div><div class="t" style="right:48.2px;top:554.40px;font-size:16.3px;line-height:16.3px;color:#000;transform:scaleX(0.8282);transform-origin:100% 0;letter-spacing:0px">APFoLi</div><div class="abs" style="left:500px;top:573px;width:624px;height:19px;background:#fff"></div><div class="abs" style="left:459px;top:592px;width:40px;height:1px;background:#a9c2de"></div><div class="abs dotx" style="left:500px;top:592px;width:624px;height:1px;"></div><div class="t" style="left:502.6px;top:574.40px;font-size:16.3px;line-height:16.3px;color:#000;transform:scaleX(0.8282);transform-origin:0 0;letter-spacing:0px">ApFoLiSP</div><div class="abs" style="left:624px;top:573px;width:407px;height:19px;overflow:hidden"><div class="t" style="left:0px;top:1.40px;font-size:16.3px;line-height:16.3px;color:#000;transform:scaleX(0.8282);transform-origin:0 0;letter-spacing:0px">ApFoLiSP</div></div><div class="t" style="right:26.4px;top:574.40px;font-size:16.3px;line-height:16.3px;color:#000;transform:scaleX(0.8282);transform-origin:100% 0;letter-spacing:0px">APFoLiSp</div><div class="abs" style="left:500px;top:593px;width:624px;height:19px;background:#f0f0f0"></div><div class="abs" style="left:459px;top:612px;width:40px;height:1px;background:#a9c2de"></div><div class="abs dotx" style="left:500px;top:612px;width:624px;height:1px;"></div><div class="t" style="left:502.6px;top:594.40px;font-size:16.3px;line-height:16.3px;color:#000;transform:scaleX(0.8282);transform-origin:0 0;letter-spacing:0px">APFoRe</div><div class="abs" style="left:624px;top:593px;width:407px;height:19px;overflow:hidden"><div class="t" style="left:0px;top:1.40px;font-size:16.3px;line-height:16.3px;color:#000;transform:scaleX(0.8282);transform-origin:0 0;letter-spacing:0px">Reception commande</div></div><div class="t" style="right:35.2px;top:594.40px;font-size:16.3px;line-height:16.3px;color:#000;transform:scaleX(0.8282);transform-origin:100% 0;letter-spacing:0px">APFoRe</div><div class="abs" style="left:500px;top:613px;width:624px;height:19px;background:#fff"></div><div class="abs" style="left:459px;top:632px;width:40px;height:1px;background:#a9c2de"></div><div class="abs dotx" style="left:500px;top:632px;width:624px;height:1px;"></div><div class="t" style="left:502.6px;top:614.40px;font-size:16.3px;line-height:16.3px;color:#000;transform:scaleX(0.8282);transform-origin:0 0;letter-spacing:0px">ApFour</div><div class="abs" style="left:624px;top:613px;width:407px;height:19px;overflow:hidden"><div class="t" style="left:0px;top:1.40px;font-size:16.3px;line-height:16.3px;color:#000;transform:scaleX(0.8282);transform-origin:0 0;letter-spacing:0px">Fournisseurs</div></div><div class="t" style="right:46.2px;top:614.40px;font-size:16.3px;line-height:16.3px;color:#000;transform:scaleX(0.8282);transform-origin:100% 0;letter-spacing:0px">ApFour</div><div class="abs" style="left:500px;top:633px;width:624px;height:19px;background:#f0f0f0"></div><div class="abs" style="left:459px;top:652px;width:40px;height:1px;background:#a9c2de"></div><div class="abs dotx" style="left:500px;top:652px;width:624px;height:1px;"></div><div class="t" style="left:502.6px;top:634.40px;font-size:16.3px;line-height:16.3px;color:#000;transform:scaleX(0.8282);transform-origin:0 0;letter-spacing:0px">APFourSp</div><div class="abs" style="left:624px;top:633px;width:407px;height:19px;overflow:hidden"><div class="t" style="left:0px;top:1.40px;font-size:16.3px;line-height:16.3px;color:#000;transform:scaleX(0.8282);transform-origin:0 0;letter-spacing:0px">var spé fournisseur</div></div><div class="t" style="right:25.3px;top:634.40px;font-size:16.3px;line-height:16.3px;color:#000;transform:scaleX(0.8282);transform-origin:100% 0;letter-spacing:0px">APFourSp</div><div class="abs" style="left:500px;top:653px;width:624px;height:19px;background:#fff"></div><div class="abs" style="left:459px;top:672px;width:40px;height:1px;background:#a9c2de"></div><div class="abs dotx" style="left:500px;top:672px;width:624px;height:1px;"></div><div class="t" style="left:502.6px;top:654.40px;font-size:16.3px;line-height:16.3px;color:#000;transform:scaleX(0.8282);transform-origin:0 0;letter-spacing:0px">APLAFDef</div><div class="abs" style="left:624px;top:653px;width:407px;height:19px;overflow:hidden"><div class="t" style="left:0px;top:1.40px;font-size:16.3px;line-height:16.3px;color:#000;transform:scaleX(0.8282);transform-origin:0 0;letter-spacing:0px">Liens Articles Fournisseurs</div></div><div class="t" style="right:22.6px;top:654.40px;font-size:16.3px;line-height:16.3px;color:#000;transform:scaleX(0.8282);transform-origin:100% 0;letter-spacing:0px">APLAFDef</div><div class="abs" style="left:459px;top:133px;width:40px;height:19px;background:#fdd38c"></div><div class="abs" style="left:459px;top:132px;width:40px;height:1px;background:#f2a650"></div><div class="abs doty" style="left:620px;top:93px;width:1px;height:579px;"></div><div class="abs doty" style="left:1035px;top:93px;width:1px;height:579px;"></div><div class="abs" style="left:499px;top:92px;width:1px;height:20px;background:#f4a24c"></div><div class="abs focus" style="left:619px;top:131px;width:200px;height:23px;"></div><div class="abs" style="left:1081px;top:13px;width:4px;height:659px;background:linear-gradient(90deg,rgba(0,0,0,0.5),rgba(0,0,0,0.18) 55%,rgba(0,0,0,0))"></div><div class="abs" style="left:758px;top:6px;width:323px;height:666px;background:#f2f2f2;box-sizing:border-box;border:1px solid #b0b0b0;border-bottom:none"></div><div class="abs" style="left:762px;top:184px;width:315px;height:27px;background:#91c9f7"></div><div class="abs" style="left:797px;top:185px;width:146px;height:24px;background:#8dc761"></div><div class="abs" style="left:797px;top:179px;width:280px;height:1px;background:#d7d7d7"></div><div class="abs" style="left:797px;top:380px;width:280px;height:1px;background:#d7d7d7"></div><div class="abs" style="left:797px;top:472px;width:280px;height:1px;background:#d7d7d7"></div><div class="abs" style="left:797px;top:509px;width:280px;height:1px;background:#d7d7d7"></div><div class="abs" style="left:797px;top:572px;width:280px;height:1px;background:#d7d7d7"></div><div class="abs" style="left:797px;top:636px;width:280px;height:1px;background:#d7d7d7"></div><div class="t " style="left:802px;top:15.60px;font-size:15px;line-height:15px;color:#000;letter-spacing:-0.363px;">Création (F9)</div><div class="t " style="left:802px;top:43.20px;font-size:15px;line-height:15px;color:#000;letter-spacing:0.056px;">Modification (F1)</div><div class="t " style="left:802px;top:70.80px;font-size:15px;line-height:15px;color:#000;letter-spacing:0.046px;">Modification Globale (Maj+F1)</div><div class="t " style="left:802px;top:98.10px;font-size:15px;line-height:15px;color:#000;letter-spacing:-0.125px;">Duplication (F7)</div><div class="t " style="left:802px;top:125.70px;font-size:15px;line-height:15px;color:#000;letter-spacing:-0.470px;">Suppression (F6)</div><div class="t " style="left:802px;top:153.00px;font-size:15px;line-height:15px;color:#000;letter-spacing:-0.481px;">Détail (F8)</div><div class="t " style="left:802px;top:189.20px;font-size:15px;line-height:15px;color:#000;letter-spacing:0.023px;">Définition Structure</div><div class="t " style="left:802px;top:217.20px;font-size:15px;line-height:15px;color:#000;-webkit-text-stroke:0.22px #000;letter-spacing:-0.330px;">Visualisation (F12)</div><div class="t " style="left:802px;top:244.60px;font-size:15px;line-height:15px;color:#000;-webkit-text-stroke:0.22px #000;letter-spacing:-0.168px;">Visualisation Partielle</div><div class="t " style="left:802px;top:271.90px;font-size:15px;line-height:15px;color:#8d8d8d;letter-spacing:-0.470px;">Gestion Table de Valeurs (F10)</div><div class="t " style="left:802px;top:299.30px;font-size:15px;line-height:15px;color:#000;-webkit-text-stroke:0.22px #000;letter-spacing:-0.417px;">Déblocage Tables Valeurs</div><div class="t " style="left:802px;top:326.70px;font-size:15px;line-height:15px;color:#8d8d8d;letter-spacing:-0.202px;">Récupération</div><div class="t " style="left:802px;top:354.10px;font-size:15px;line-height:15px;color:#8d8d8d;letter-spacing:-0.236px;">Der. version (Tableur) (Maj+F10)</div><div class="t " style="left:802px;top:389.90px;font-size:15px;line-height:15px;color:#000;letter-spacing:-0.357px;">Génération</div><div class="t " style="left:802px;top:417.30px;font-size:15px;line-height:15px;color:#000;letter-spacing:-0.359px;">Re-Génération Toutes Tab.Val.</div><div class="t " style="left:802px;top:444.60px;font-size:15px;line-height:15px;color:#000;letter-spacing:-0.052px;">Synchronisation structure</div><div class="t " style="left:802px;top:481.10px;font-size:15px;line-height:15px;color:#000;letter-spacing:-0.343px;">Cas d'Emploi dans Requêtes</div><div class="t " style="left:802px;top:517.20px;font-size:15px;line-height:15px;color:#000;letter-spacing:-0.266px;">Cas d'Emploi dans Dossier Nav.</div><div class="t " style="left:802px;top:544.50px;font-size:15px;line-height:15px;color:#000;letter-spacing:-0.391px;">Ranger dans Dossier Nav.</div><div class="t " style="left:802px;top:581.00px;font-size:15px;line-height:15px;color:#000;letter-spacing:-0.167px;">Cas d'Emploi dans les Actions</div><div class="t " style="left:802px;top:608.40px;font-size:15px;line-height:15px;color:#000;letter-spacing:-0.140px;">Créer un raccourci</div><div class="t " style="left:802px;top:644.50px;font-size:15px;line-height:15px;color:#000;letter-spacing:-0.139px;">Génération Tableur Dynamique</div><svg class="abs" style="left:1058px;top:329px" width="10" height="12" viewBox="0 0 10 12"><path d="M3 1.5L7.2 6L3 10.5" fill="none" stroke="#a0a0a0" stroke-width="1.2"/></svg><svg class="abs" style="left:955px;top:180px" width="40" height="45" viewBox="0 0 40 45"><polygon points="11.60,9.20 11.60,33.80 17.34,28.22 21.44,37.08 24.72,35.44 20.78,26.58 28.66,26.58" fill="#fff" stroke="#fff" stroke-width="3.6" stroke-linejoin="miter" opacity="0.8"/><polygon points="11.60,9.20 11.60,33.80 17.34,28.22 21.44,37.08 24.72,35.44 20.78,26.58 28.66,26.58" fill="#fff" stroke="#000" stroke-width="1.8" stroke-linejoin="miter"/></svg>
</body></html>
